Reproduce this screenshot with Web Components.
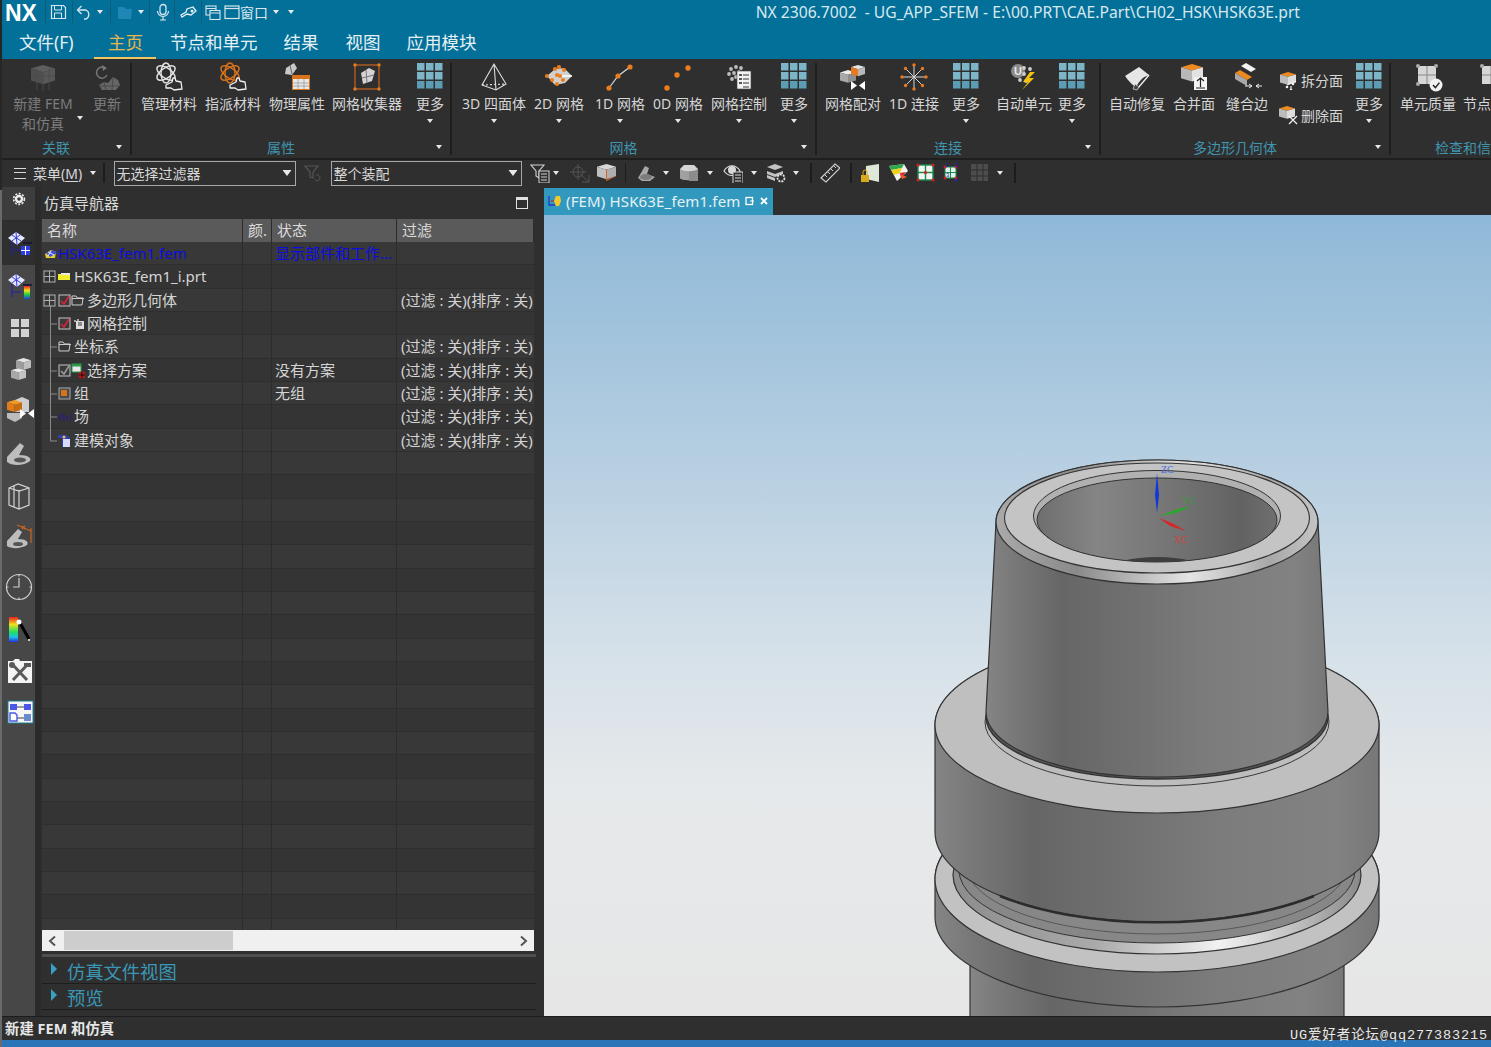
<!DOCTYPE html>
<html lang="zh">
<head>
<meta charset="utf-8">
<title>NX 2306</title>
<style>
    html, body { margin: 0; height: 100%; overflow: hidden; }
    body {
        background: linear-gradient(#262626 0, #262626 190px, #6a6a6a 190px);
        color: #dcdcdc;
        font-family: "Noto Sans", "Noto Sans CJK SC", sans-serif;
    }
</style>
</head>
<body>
<nx-app>
    <nx-titlebar></nx-titlebar>
    <nx-menubar></nx-menubar>
    <nx-ribbon>
        <nx-group w="130" pad="3" title="关联" disabled>
            <nx-rbtn w="76" icon="newfem" menu="side" grey>新建 FEM<br>和仿真</nx-rbtn>
            <nx-rbtn w="40" icon="update" grey>更新</nx-rbtn>
        </nx-group>
        <nx-group w="320" pad="8" title="属性">
            <nx-rbtn w="58" icon="matman">管理材料</nx-rbtn>
            <nx-rbtn w="58" icon="matset">指派材料</nx-rbtn>
            <nx-rbtn w="58" icon="phys">物理属性</nx-rbtn>
            <nx-rbtn w="70" icon="collector">网格收集器</nx-rbtn>
            <nx-rbtn w="34" ml="5" icon="more" menu="down">更多</nx-rbtn>
        </nx-group>
        <nx-group w="365" pad="9" title="网格">
            <nx-rbtn w="66" icon="tetra" menu="down">3D 四面体</nx-rbtn>
            <nx-rbtn w="52" icon="mesh2d" menu="down">2D 网格</nx-rbtn>
            <nx-rbtn w="58" icon="mesh1d" menu="down">1D 网格</nx-rbtn>
            <nx-rbtn w="46" icon="mesh0d" menu="down">0D 网格</nx-rbtn>
            <nx-rbtn w="64" icon="meshctl" menu="down">网格控制</nx-rbtn>
            <nx-rbtn w="34" icon="more" menu="down">更多</nx-rbtn>
        </nx-group>
        <nx-group w="284" pad="7" title="连接">
            <nx-rbtn w="58" icon="pair">网格配对</nx-rbtn>
            <nx-rbtn w="52" icon="star">1D 连接</nx-rbtn>
            <nx-rbtn w="40" icon="more" menu="down">更多</nx-rbtn>
            <nx-rbtn w="58" ml="3" icon="auto">自动单元</nx-rbtn>
            <nx-rbtn w="26" icon="more" menu="down">更多</nx-rbtn>
        </nx-group>
        <nx-group w="290" pad="7" title="多边形几何体">
            <nx-rbtn w="58" icon="repair">自动修复</nx-rbtn>
            <nx-rbtn w="44" icon="merge">合并面</nx-rbtn>
            <nx-rbtn w="50" icon="stitch">缝合边</nx-rbtn>
            <nx-stack w="67"></nx-stack>
            <nx-rbtn w="36" icon="more" menu="down">更多</nx-rbtn>
        </nx-group>
        <nx-group w="100" pad="8" title="检查和信" last>
            <nx-rbtn w="58" icon="quality">单元质量</nx-rbtn>
            <nx-rbtn w="28" icon="nodeq">节点</nx-rbtn>
        </nx-group>
    </nx-ribbon>
    <nx-toolbar></nx-toolbar>
    <nx-main>
        <nx-rail></nx-rail>
        <nx-navigator>
            <nx-row kind="fem" state="显示部件和工作..." blue>HSK63E_fem1.fem</nx-row>
            <nx-row kind="prt">HSK63E_fem1_i.prt</nx-row>
            <nx-row kind="poly" filter>多边形几何体</nx-row>
            <nx-row kind="ctrl">网格控制</nx-row>
            <nx-row kind="csys" filter>坐标系</nx-row>
            <nx-row kind="sel" state="没有方案" filter>选择方案</nx-row>
            <nx-row kind="grp" state="无组" filter>组</nx-row>
            <nx-row kind="fld" filter>场</nx-row>
            <nx-row kind="obj" filter>建模对象</nx-row>
        </nx-navigator>
        <nx-viewport></nx-viewport>
    </nx-main>
    <nx-statusbar></nx-statusbar>
</nx-app>

<script>
// cube in three flat faces, used by a lot of the icons
function cube(x, y, s, top, left, right) {
    const h = s * 0.5;
    return `<path d="M${x} ${y + h * .6} L${x + s} ${y} L${x + 2 * s} ${y + h * .6} L${x + s} ${y + h * 1.2}Z" fill="${top}"/>
        <path d="M${x} ${y + h * .6} L${x + s} ${y + h * 1.2} V${y + h * 1.2 + s} L${x} ${y + h * .6 + s}Z" fill="${left}"/>
        <path d="M${x + 2 * s} ${y + h * .6} L${x + s} ${y + h * 1.2} V${y + h * 1.2 + s} L${x + 2 * s} ${y + h * .6 + s}Z" fill="${right}"/>`;
}

function atom(color) {
    return `<g fill="none" stroke="${color}" stroke-width="1.4">
        <ellipse cx="12" cy="11" rx="10.5" ry="5" transform="rotate(35 12 11)"/>
        <ellipse cx="12" cy="11" rx="10.5" ry="5" transform="rotate(-35 12 11)"/>
        <ellipse cx="12" cy="11" rx="5" ry="10"/></g>
        <path d="M12 23 l6 -3 1 -4 2 0 1 3 5 1 1 7 -8 1 -3 -2 -5 0z" fill="#2f2f2f" stroke="#f0f0f0" stroke-width="1.3" stroke-linejoin="round"/>`;
}

function nodes(points, r, color) {
    return points.map(p => `<circle cx="${p[0]}" cy="${p[1]}" r="${r}" fill="${color}"/>`).join('');
}

function butterfly(x, y) {
    return `<path d="M${x} ${y} l6 4.5 -6 4.5z M${x + 14} ${y} l-6 4.5 6 4.5z" fill="#fff"/>`;
}

function star() {
    let rays = '', ends = [];
    for (let i = 0; i < 8; i++) {
        const a = i * Math.PI / 4 + Math.PI / 2;
        const x = 15 + 12 * Math.cos(a), y = 15 + 12 * Math.sin(a);
        rays += `<path d="M15 15 L${x} ${y}" stroke="#d8d8d8" stroke-width="1"/>`;
        ends.push([x, y]);
    }
    return rays + nodes(ends, 1.7, '#e87a1d');
}

// navigator tab: mesh diamond, tree line and a small square
function navBase() {
    return `<path d="M4 10 L12 4 L21 10 L13 17z" fill="#e4e9ff"/><path d="M8 7 L17 13 M12 4 L13 17 M16 7 L8 13" stroke="#3838d8"/>
        <path d="M8 14 V27 M8 22 H17 M19 15 H28" fill="none" stroke="#2020b0"/><path d="M19 15 H28" stroke="#111" stroke-width="1.2"/>`;
}

const ICONS = {
    more: `<g fill="#7db5c8"><rect x="2" y="1" width="7.5" height="7.5"/><rect x="11" y="1" width="7.5" height="7.5"/><rect x="20" y="1" width="7.5" height="7.5"/>
        <rect x="2" y="10" width="7.5" height="7.5"/><rect x="11" y="10" width="7.5" height="7.5"/><rect x="20" y="10" width="7.5" height="7.5"/></g>
        <g fill="#5c9cb4"><rect x="2" y="19" width="7.5" height="7.5"/><rect x="11" y="19" width="7.5" height="7.5"/><rect x="20" y="19" width="7.5" height="7.5"/></g>`,
    newfem: `<g opacity=".75">${cube(3, 3, 12, '#6e6e6e', '#5a5a5a', '#666')}</g>
        <path d="M3 14h24M9 6v22M15 10v19M21 6v22" stroke="#4c4c4c" stroke-width=".8"/>`,
    update: `<path d="M13 6 A5.5 5.5 0 1 0 15 13" fill="none" stroke="#777" stroke-width="1.5"/><path d="M10 3 L15 6 L11 9z" fill="#777"/>
        <path d="M7 23 L12 20 L16 21 L21 15 L26 18 L28 23 L24 28 H10z" fill="#666"/><path d="M12 20 L14 28 M21 15 L20 28 M8 24 H27" stroke="#444" stroke-width=".8"/>`,
    matman: atom('#e4e4e4'),
    matset: atom('#d8731c'),
    phys: `<path d="M4 6 L12 1 L15 6 L10 13 L3 12z" fill="#c8c8c8"/><path d="M8 3 L10 12" stroke="#666"/>
        <rect x="10.5" y="13.5" width="17" height="14" fill="#e8e8e8" stroke="#d8731c"/><rect x="10.5" y="13.5" width="17" height="3.5" fill="#d8731c"/>
        <path d="M16 17v10M22 17v10M11 21h16M11 24h16" stroke="#999" stroke-width=".8"/>`,
    collector: `<rect x="3" y="3" width="24" height="24" fill="none" stroke="#c8641e" stroke-width="1.2"/>${nodes([[3, 3], [27, 3], [3, 27], [27, 27]], 1.7, '#e87a1d')}
        <path d="M9 11 L17 6 L23 9 L20 19 L11 22z" fill="#d4d4d4"/><path d="M14 8 L15 21 M10 16 L22 13" stroke="#777"/>`,
    tetra: `<g fill="none" stroke="#dcdcdc" stroke-width="1.1"><path d="M15 2 L3 23 L17 28 L27 22Z M15 2 L17 28"/><path d="M3 23 L27 22" stroke-dasharray="2 2"/></g>`,
    mesh2d: `<path d="M3 14 L11 7 L20 6 L28 14 L21 21 L11 23z" fill="#d0d0d0"/>
        ${nodes([[3, 14], [11, 7], [15, 5], [20, 8], [13, 13], [16, 14], [8, 18], [13, 22], [19, 18]], 2.1, '#ea7d1e')}<path d="M18 14h10" stroke="#fff" stroke-width="1.5"/>`,
    mesh1d: `<path d="M4 26 L13 14 L25 5" fill="none" stroke="#d8d8d8" stroke-width="1.2"/>${nodes([[4, 26], [13, 14], [25, 5]], 2.6, '#ea7d1e')}`,
    mesh0d: nodes([[4, 26], [14, 13], [25, 6]], 2.7, '#ea7d1e'),
    meshctl: `${nodes([[7, 7], [12, 5], [17, 6], [5, 12], [10, 11], [15, 10], [8, 17], [12, 15]], 1.9, '#bdbdbd')}
        <rect x="13" y="9" width="14" height="18" fill="#f2f2f2" stroke="#444" stroke-width=".6"/>
        <path d="M19 13h6M19 17h6M19 21h6M19 25h6" stroke="#333"/><path d="M15 12h3v2h-3zM15 16h3v2h-3zM15 20h3v2h-3z" fill="#555"/>`,
    pair: `${cube(2, 8, 8, '#ececec', '#a8a8a8', '#8e8e8e')}${cube(13, 3, 7, '#e4e4e4', '#e87a1d', '#b8b8b8')}${butterfly(13, 19)}`,
    star: star(),
    auto: `<circle cx="9" cy="9" r="7" fill="#8a8a8a"/><text x="9" y="13" font-size="11" font-weight="700" text-anchor="middle" fill="#e8e8e8" font-family="Liberation Sans">U</text>
        ${nodes([[15, 6], [21, 7], [15, 12], [11, 18], [17, 19]], 1.9, '#cfcfcf')}<path d="M21 10 L14 20 L19 20 L13 28 L25 16 L20 16 L26 10z" fill="#f4c20d"/>`,
    repair: `<path d="M3 14 L17 5 L27 13 C20 15 17 20 14 25 C10 23 6 18 3 14z" fill="#e6e6e6"/><path d="M27 13 L16 26" stroke="#eee" stroke-width="1.4"/>
        <path d="M13 22 l4 3 -2 3 -4 -1z" fill="#444" stroke="#ddd" stroke-width=".7"/>`,
    merge: `${cube(2, 2, 11, '#ee8a1f', '#b8b8b8', '#e2e2e2')}<rect x="15" y="15" width="13" height="13" fill="#f4f4f4"/>
        <path d="M21.5 16v9M18 19l3.5-3 3.5 3M17 26h9" stroke="#222" fill="none" stroke-width="1.2"/>`,
    stitch: `<path d="M9 4 L14 1 L24 7 L19 10z" fill="#f2f2f2"/><path d="M3 11 L8 8 L20 15 L15 18z" fill="#ee8a1f"/><path d="M3 11 V17 L15 24 V18z" fill="#a8a8a8"/>
        <path d="M13 24h7M17 22l3 2-3 2M30 24h-6M27 22l-3 2 3 2" stroke="#eee" fill="none"/>`,
    split: `${cube(2, 2, 8, '#ee8a1f', '#bbb', '#ddd')}<path d="M9 15 L18 11 M13 16 L13 20" stroke="#eee" stroke-width="1.2"/>${nodes([[9, 17], [15, 14], [13, 20]], 1.3, '#f0f0f0')}`,
    del: `${cube(1, 1, 8, '#ee8a1f', '#bbb', '#ddd')}<path d="M11 11l8 8M19 11l-8 8" stroke="#eee" stroke-width="1.3"/>`,
    quality: `<rect x="5" y="4" width="18" height="18" fill="#d6d6d6"/><path d="M14 4v18M5 13h18" stroke="#888"/>${nodes([[5, 4], [23, 4], [5, 22], [23, 22]], 2, '#aaa')}
        <circle cx="23" cy="23" r="6.5" fill="#f2f2f2"/><path d="M20 23l2.4 2.6 4-5" stroke="#222" fill="none" stroke-width="1.5"/>`,
    nodeq: `<rect x="20" y="4" width="18" height="18" fill="#d6d6d6"/><path d="M29 4v18M20 13h18" stroke="#888"/><circle cx="20" cy="4" r="2" fill="#aaa"/>`,

    save: `<path d="M2.5 2.5h12l2 2v11h-14z" fill="none" stroke="#d8e6ec" stroke-width="1.2"/><path d="M5.5 3v4h7V3M5.5 15v-5h7v5" fill="none" stroke="#d8e6ec"/>`,
    undo: `<path d="M3 7 H11 A5 5 0 0 1 11 16 H9" fill="none" stroke="#d8e6ec" stroke-width="1.3"/><path d="M6.5 3 L2.5 7 L6.5 11" fill="none" stroke="#d8e6ec" stroke-width="1.3"/>`,
    openf: `<path d="M2 4h6l2 2h6l-1 10H2z" fill="#1f86b5"/>`,
    mic: `<rect x="6" y="1.5" width="6" height="10" rx="3" fill="none" stroke="#d8e6ec" stroke-width="1.3"/><path d="M3.5 8a5.5 5.5 0 0 0 11 0M9 14v3M6 17h6" fill="none" stroke="#d8e6ec" stroke-width="1.2"/>`,
    pin: `<path d="M2 12 L7 9 L8 6 L14 4 L17 8 L12 12 L8 11 L3 14z" fill="none" stroke="#e6eff3" stroke-width="1.3"/><circle cx="13" cy="8" r="1.5" fill="#e6eff3"/>`,
    wins: `<rect x="2" y="3" width="10" height="9" fill="none" stroke="#d8e6ec" stroke-width="1.1"/><rect x="6" y="7.5" width="10" height="9" fill="#03709a" stroke="#d8e6ec" stroke-width="1.1"/><path d="M6 10h10M2 5.5h10" stroke="#d8e6ec"/>`,
    win: `<rect x="2" y="3" width="14" height="12.5" fill="none" stroke="#d8e6ec" stroke-width="1.2"/><path d="M2 5.5h14" stroke="#d8e6ec" stroke-width="1.2"/>`,

    filterg: `<path d="M2 3h13l-5 6v6l-3-1V9z" fill="none" stroke="#555" stroke-width="1.2"/><path d="M12 17a3 3 0 1 0 1-5" fill="none" stroke="#555"/>`,
    filter: `<path d="M1 2h13l-5 6v7l-3-2V8z" fill="none" stroke="#d4d4d4" stroke-width="1.1"/><rect x="9" y="8" width="10" height="12" fill="#2f2f2f" stroke="#d4d4d4"/><path d="M11 11h6M11 14h6M11 17h6" stroke="#d4d4d4"/>`,
    cross: `<g stroke="#555" fill="none"><circle cx="8" cy="9" r="5"/><path d="M8 1v16M0 9h16M10 11l9 8M19 12v7h-7"/></g>`,
    snap: `${cube(1, 1, 9.5, '#d8d8d8', '#c0c0c0', '#aeaeae')}<path d="M10.5 6.5v11l8-4" fill="none" stroke="#d0682a"/>`,
    shade: `<path d="M2 15 L9 3 L13 5 L11 11 L19 14 L14 18 H6z" fill="#a8a8a8"/><ellipse cx="10" cy="14" rx="6" ry="3" fill="#7c7c7c"/>`,
    cyl: `<path d="M1 6v9c0 3 18 3 18 0V6z" fill="#a0a0a0"/><path d="M10 4v14h9V6z" fill="#8c8c8c"/><path d="M1 6 L5 2 H15 L19 6 C15 9 5 9 1 6z" fill="#d4d4d4"/>`,
    eye: `<path d="M1 8c4-7 12-7 16 0-4 6-12 6-16 0z" fill="none" stroke="#d8d8d8" stroke-width="1.2"/><circle cx="9" cy="7" r="4" fill="#d8d8d8"/><rect x="10" y="9" width="10" height="12" fill="#2f2f2f" stroke="#d8d8d8"/><path d="M12 12h6M12 15h6M12 18h6" stroke="#d8d8d8"/>`,
    layers: `<path d="M1 4l8-3 8 3-8 3zM1 8l8 3 8-3v3l-8 3-8-3zM1 12l8 3v3l-8-3z" fill="#c4c4c4"/><circle cx="15" cy="15" r="3.5" fill="#2f2f2f" stroke="#ddd" stroke-width="1.8" stroke-dasharray="2 1"/>`,
    ruler: `<path d="M1 15 L15 1 L20 5 L6 19z" fill="none" stroke="#cfcfcf" stroke-width="1.2"/><path d="M5 12l2 2M8 9l2 2M11 6l2 2M14 3l2 2" stroke="#cfcfcf"/>`,
    lock: `<path d="M6 3 L19 1 V19 L6 16z" fill="#dfe7d8"/><rect x="1" y="12" width="8" height="7" fill="#d9a920"/><path d="M3 12V9a2 2 0 0 1 4 0v3" fill="none" stroke="#d9a920"/>`,
    cone: `<path d="M1 3 L16 1 L20 8 L9 18z" fill="#f4f4f4"/><path d="M1 3 L16 1 L14 5 L3 7z" fill="#2aa84a"/><path d="M3 7 L14 5 L12 10 L6 12z" fill="#ecd21c"/><path d="M12 10 L18 9 L13 15z" fill="#e02424"/><path d="M12 11l7 3-5 2z" fill="#ea5a2a"/>`,
    grid4: `<rect x="2" y="2" width="15" height="15" fill="#f4f4f4" stroke="#1b8a4a" stroke-width="1.4"/><path d="M9.5 2v15M2 9.5h15" stroke="#1b8a4a" stroke-width="1.4"/>${nodes([[2, 2], [17, 2], [9.5, 9.5], [2, 17], [17, 17]], 1.6, '#d02020')}`,
    grid4n: `<rect x="3" y="4" width="11" height="11" fill="#dff2f0" stroke="#1b8a4a"/><path d="M8.5 4v11M3 9.5h11" stroke="#1b8a4a"/>${nodes([[3, 4], [14, 4], [3, 15], [14, 15]], 1.5, '#c02020')}
        <g font-size="6" fill="#2020d0" font-family="Liberation Sans"><text x="3" y="3.5">1</text><text x="13" y="3.5">2</text><text x="4" y="14">3</text><text x="13" y="19">4</text></g>`,
    gridg: `<rect x="1" y="1" width="17" height="17" fill="#4d4d4d"/><path d="M7 1v17M13 1v17M1 7h17M1 13h17" stroke="#2f2f2f"/>`,

    gear: `<circle cx="9" cy="9" r="3" fill="none" stroke="#eee" stroke-width="2.4"/><circle cx="9" cy="9" r="5.4" fill="none" stroke="#eee" stroke-width="1.6" stroke-dasharray="2 1.5"/>`,
    navfem: `${navBase()}<rect x="17" y="18" width="9" height="9" fill="#2c3ce0"/><path d="M21.5 18v9M17 22.5h9" stroke="#fff"/>`,
    navres: `${navBase()}<defs><linearGradient id="rb" x1="0" y1="0" x2="0" y2="1"><stop offset="0" stop-color="#ee2020"/><stop offset=".35" stop-color="#eee020"/><stop offset=".65" stop-color="#20d040"/><stop offset="1" stop-color="#2040e0"/></linearGradient></defs><rect x="20" y="16" width="6" height="13" fill="url(#rb)"/>`,
    tiles: `<g fill="#d2d2d2"><rect x="7" y="7" width="8" height="8"/><rect x="17" y="7" width="8" height="8"/><rect x="7" y="17" width="8" height="8"/><rect x="17" y="17" width="8" height="8"/></g>`,
    blocks: `${cube(7, 14, 7.5, '#e8e8e8', '#a8a8a8', '#c4c4c4')}${cube(12, 4, 7.5, '#e4e4e4', '#9c9c9c', '#bebebe')}`,
    orange: `<path d="M11 4 L18 1 L25 4 V16 H11z" fill="#cfcfcf"/><path d="M3 17 V22 L11 26 L18 22 V17z" fill="#bcbcbc"/>${cube(3, 4, 7.5, '#f19a2a', '#e07d18', '#c86c10')}${butterfly(16, 13)}`,
    bracket: `<path d="M3 19 L16 5 L20 8 L15 17 C24 17 28 20 26 23 C20 28 8 28 3 24z" fill="#bdbdbd"/><ellipse cx="16" cy="22" rx="6" ry="2.5" fill="#555"/>`,
    books: `<path d="M5 8 L14 4 L25 8 V25 L15 29 L5 25z M15 10 V29 M5 8 L15 11 L25 8 M10 6 V27" fill="none" stroke="#d4d4d4" stroke-width="1.2"/>`,
    dim: `<path d="M3 19 L14 7 L18 10 L14 17 C22 17 25 20 23 23 C17 27 7 27 3 24z" fill="#bdbdbd"/><ellipse cx="14" cy="22" rx="5" ry="2" fill="#555"/>
        <path d="M13 3 L27 9 M27 6 V21 M18 4 l3 3 M21 4 l-3 3" stroke="#c8641e" fill="none" stroke-width="1.2"/>`,
    clock: `<circle cx="15" cy="15" r="12.5" fill="none" stroke="#cfcfcf" stroke-width="1.2"/><path d="M15 6v9H9M15 2.5v2M15 25.5v2M2.5 15h2M25.5 15h2" stroke="#cfcfcf" stroke-width="1.2" fill="none"/>`,
    spectrum: `<defs><linearGradient id="sp" x1="0" y1="0" x2="0" y2="1"><stop offset="0" stop-color="#ee2020"/><stop offset=".3" stop-color="#eee020"/><stop offset=".6" stop-color="#20e060"/><stop offset=".8" stop-color="#20c0e0"/><stop offset="1" stop-color="#2030e0"/></linearGradient></defs>
        <rect x="5" y="3" width="9" height="25" fill="url(#sp)"/><path d="M16 9 L25 25" stroke="#000" stroke-width="3"/><circle cx="15" cy="8" r="2.5" fill="#fff"/><circle cx="25" cy="26" r="1" fill="#fff"/>`,
    tools: `<path d="M4 6h5l2-2h4l1 2h12v22H4z" fill="#f4f4f4"/><path d="M9 10 L23 25 M23 10 L9 25" stroke="#5a5a5a" stroke-width="3"/><circle cx="8" cy="10" r="3" fill="#5a5a5a"/><path d="M20 8h7v4h-7z" fill="#5a5a5a"/>`,
    layout: `<rect x="4" y="4" width="25" height="22" fill="#f6f6f6" stroke="#1f7f8f"/><rect x="6" y="7" width="7" height="6" fill="#4a58e8"/><rect x="20" y="7" width="7" height="6" fill="#4a58e8"/><path d="M13 10h7M13 21h7" stroke="#444"/>
        <path d="M6 16h5l2 2v6H6z" fill="#fff" stroke="#4a58e8" stroke-width="1.4"/><rect x="20" y="17" width="7" height="7" fill="#6a8ad0"/>`,
};

class NxIcon extends HTMLElement {
    connectedCallback() {
        const w = this.getAttribute('w') || 30;
        const h = this.getAttribute('h') || w;
        const vb = this.getAttribute('vb') || `0 0 ${w} ${h}`;
        this.attachShadow({ mode: 'open' }).innerHTML = `
            <style>:host { display: block; flex: none; width: ${w}px; height: ${h}px; } svg { display: block; }</style>
            <svg width="${w}" height="${h}" viewBox="${vb}">${ICONS[this.getAttribute('name')] || ''}</svg>`;
    }
}

class NxCaret extends HTMLElement {
    connectedCallback() {
        const color = this.getAttribute('color') || '#e8e8e8';
        this.attachShadow({ mode: 'open' }).innerHTML = `
            <style>
                :host { display: block; flex: none; width: 0; height: 0;
                    border-left: 3.5px solid transparent; border-right: 3.5px solid transparent; border-top: 4px solid ${color}; }
            </style>`;
    }
}

class NxApp extends HTMLElement {
    connectedCallback() {
        this.attachShadow({ mode: 'open' }).innerHTML = `
            <style>:host { display: flex; flex-direction: column; height: 100vh; padding-left: 2px; box-sizing: border-box; overflow: hidden; }</style>
            <slot></slot>`;
    }
}

class NxTitlebar extends HTMLElement {
    connectedCallback() {
        this.attachShadow({ mode: 'open' }).innerHTML = `
            <style>
                :host { display: flex; align-items: center; height: 27px; background: #03709a; color: #dbe9ef; flex: none; padding: 0 191px 3px 0; box-sizing: border-box; }
                .nx { font: 700 23px/27px "Liberation Sans", sans-serif; color: #fff; margin-left: 3px; width: 35px; align-self: flex-start; height: 27px; }
                .sep { width: 1px; height: 22px; background: #0c5b78; }
                .txt { font-size: 14px; }
                .title { margin-left: auto; font-size: 15.65px; white-space: pre; color: #d8e8ef; }
            </style>
            <div class="nx">NX</div>
            <div class="sep" style="margin-left:5px"></div>
            <nx-icon name="save" w="18" h="18" style="margin-left:3px"></nx-icon>
            <div class="sep" style="margin-left:5px"></div>
            <nx-icon name="undo" w="18" h="18" style="margin-left:2px"></nx-icon>
            <nx-caret style="margin-left:4px"></nx-caret>
            <div class="sep" style="margin-left:7px"></div>
            <nx-icon name="openf" w="18" h="18" style="margin-left:5px"></nx-icon>
            <nx-caret style="margin-left:4px"></nx-caret>
            <div class="sep" style="margin-left:5px"></div>
            <nx-icon name="mic" w="18" h="18" style="margin-left:4px"></nx-icon>
            <div class="sep" style="margin-left:2px"></div>
            <nx-icon name="pin" w="18" h="18" style="margin-left:4px"></nx-icon>
            <div class="sep" style="margin-left:4px"></div>
            <nx-icon name="wins" w="18" h="18" style="margin-left:2px"></nx-icon>
            <nx-icon name="win" w="18" h="18" style="margin-left:1px"></nx-icon>
            <span class="txt" style="margin-left:-1px">窗口</span>
            <nx-caret style="margin-left:5px"></nx-caret>
            <nx-caret style="margin-left:9px"></nx-caret>
            <div class="title">NX 2306.7002  - UG_APP_SFEM - E:\\00.PRT\\CAE.Part\\CH02_HSK\\HSK63E.prt</div>`;
    }
}

class NxMenubar extends HTMLElement {
    connectedCallback() {
        this.attachShadow({ mode: 'open' }).innerHTML = `
            <style>
                :host { display: flex; height: 32px; background: #03709a; flex: none; font-size: 17.5px; color: #e6f0f4; }
                div { line-height: 30px; height: 32px; box-sizing: border-box; white-space: nowrap; }
                .on { color: #e9b64e; border-bottom: 2px solid #f2c564; padding: 0 13px 0 14px; margin-left: 20px; }
            </style>
            <div style="margin-left:17px;width:55px">文件(F)</div>
            <div class="on">主页</div>
            <div style="margin-left:14px">节点和单元</div>
            <div style="margin-left:26px">结果</div>
            <div style="margin-left:27px">视图</div>
            <div style="margin-left:26px">应用模块</div>`;
    }
}

class NxRibbon extends HTMLElement {
    connectedCallback() {
        this.attachShadow({ mode: 'open' }).innerHTML = `
            <style>:host { display: flex; height: 99px; background: #2f2f2f; flex: none; overflow: hidden; }</style>
            <slot></slot>`;
    }
}

class NxGroup extends HTMLElement {
    connectedCallback() {
        const last = this.hasAttribute('last');
        this.attachShadow({ mode: 'open' }).innerHTML = `
            <style>
                :host { display: flex; flex-direction: column; flex: none; box-sizing: border-box; position: relative;
                    width: ${this.getAttribute('w')}px; }
                :host::after { content: ""; position: absolute; right: 0; top: 4px; bottom: 3px; width: 2px; background: #1e1e1e; display: ${last ? 'none' : 'block'}; }
                .body { flex: 1; display: flex; gap: 6px; padding-left: ${this.getAttribute('pad')}px; min-height: 0; }
                .foot { height: 21px; line-height: 21px; text-align: ${last ? 'left' : 'center'}; font-size: 14px; color: #3f94ae; position: relative;
                    padding: 0 ${last ? 0 : 22}px 0 ${last ? 44 : 0}px; white-space: nowrap; }
                nx-caret { position: absolute; right: 10px; top: 8px; }
            </style>
            <div class="body"><slot></slot></div>
            <div class="foot">${this.getAttribute('title')}${last ? '' : '<nx-caret></nx-caret>'}</div>`;
    }
}

class NxRbtn extends HTMLElement {
    connectedCallback() {
        const menu = this.getAttribute('menu');
        const grey = this.hasAttribute('grey');
        const ml = this.getAttribute('ml') || 0;
        this.attachShadow({ mode: 'open' }).innerHTML = `
            <style>
                :host { display: flex; flex-direction: column; align-items: center; flex: none; position: relative; box-sizing: border-box;
                    width: ${this.getAttribute('w')}px; margin-left: ${ml}px; padding-top: 3px; }
                .label { font-size: 14px; line-height: 20px; text-align: center; white-space: nowrap; margin-top: 2px; color: ${grey ? '#7d7d7d' : '#d6d6d6'}; }
                .down { margin-top: 5px; }
                .side { position: absolute; right: -2px; top: 57px; }
            </style>
            <nx-icon name="${this.getAttribute('icon')}" w="30"></nx-icon>
            <div class="label"><slot></slot></div>
            ${menu === 'down' ? '<nx-caret class="down"></nx-caret>' : ''}
            ${menu === 'side' ? '<nx-caret class="side"></nx-caret>' : ''}`;
    }
}

// the two small buttons on top of each other in the polygon group
class NxStack extends HTMLElement {
    connectedCallback() {
        this.attachShadow({ mode: 'open' }).innerHTML = `
            <style>
                :host { display: flex; flex-direction: column; gap: 15px; flex: none; width: ${this.getAttribute('w')}px; padding-top: 11px; box-sizing: border-box; font-size: 14px; color: #d6d6d6; }
                div { display: flex; align-items: center; gap: 3px; height: 20px; white-space: nowrap; }
            </style>
            <div><nx-icon name="split" w="20" vb="0 0 20 20"></nx-icon>拆分面</div>
            <div><nx-icon name="del" w="20" vb="0 0 20 20"></nx-icon>删除面</div>`;
    }
}

class NxSelect extends HTMLElement {
    connectedCallback() {
        this.attachShadow({ mode: 'open' }).innerHTML = `
            <style>
                :host { display: flex; align-items: center; justify-content: space-between; box-sizing: border-box; flex: none; height: 25px;
                    width: ${this.getAttribute('w')}px; margin-left: ${this.getAttribute('ml')}px; border: 1.5px solid #a8a8a8; padding: 0 5px 0 2px;
                    font-size: 14px; color: #d8d8d8; white-space: nowrap; }
                nx-caret { transform: scale(1.5); }
            </style>
            <slot></slot><nx-caret></nx-caret>`;
    }
}

class NxToolbar extends HTMLElement {
    connectedCallback() {
        const tool = (name, ml, w = 20) => `<nx-icon name="${name}" w="${w}" h="20" vb="0 0 ${w} 20" style="margin-left:${ml}px"></nx-icon>`;
        const caret = ml => `<nx-caret style="margin-left:${ml}px"></nx-caret>`;
        const sep = ml => `<div class="sep" style="margin-left:${ml}px"></div>`;
        this.attachShadow({ mode: 'open' }).innerHTML = `
            <style>
                :host { display: flex; align-items: center; height: 29px; box-sizing: border-box; background: #2f2f2f;
                    border-top: 2px solid #1f1f1f; padding-bottom: 1px; flex: none; font-size: 14px; color: #d8d8d8; white-space: nowrap; }
                .sep { flex: none; width: 1.5px; height: 20px; background: #1c1c1c; }
                .burger { margin-left: 12px; width: 12px; height: 9px; border-top: 1.2px solid #d8d8d8; border-bottom: 1.2px solid #d8d8d8; position: relative; }
                .burger::after { content: ""; position: absolute; left: 0; right: 0; top: 3.5px; height: 1.2px; background: #d8d8d8; }
                .menu { margin-left: 7px; width: 54px; }
                u { text-decoration: underline; text-underline-offset: 2px; }
            </style>
            <div class="burger"></div>
            <div class="menu">菜单(<u>M</u>)</div>
            ${caret(3)}${sep(7)}
            <nx-select w="182" ml="9">无选择过滤器</nx-select>
            ${tool('filterg', 7)}
            <nx-select w="191" ml="8">整个装配</nx-select>
            ${tool('filter', 8)}${caret(3)}
            ${tool('cross', 11)}${tool('snap', 6)}${sep(9)}
            ${tool('shade', 10)}${caret(7)}
            ${tool('cyl', 10)}${caret(7.5)}
            ${tool('eye', 10.5)}${caret(7.5)}
            ${tool('layers', 9.5)}${caret(6.5)}
            ${sep(11.5)}${tool('ruler', 8.5)}${sep(10)}
            ${tool('lock', 8.5)}${tool('cone', 8)}${tool('grid4', 8)}${tool('grid4n', 6)}${tool('gridg', 8)}${caret(6.5)}
            ${sep(11.5)}`;
    }
}

class NxMain extends HTMLElement {
    connectedCallback() {
        this.attachShadow({ mode: 'open' }).innerHTML = `
            <style>:host { display: flex; flex: 1; min-height: 0; background: #2f2f2f; }</style>
            <slot></slot>`;
    }
}

class NxRail extends HTMLElement {
    connectedCallback() {
        const names = ['navres', 'tiles', 'blocks', 'orange', 'bracket', 'books', 'dim'];
        const lower = ['clock', 'spectrum', 'tools', 'layout'];
        const item = n => `<div class="item"><nx-icon name="${n}" w="30"></nx-icon></div>`;
        this.attachShadow({ mode: 'open' }).innerHTML = `
            <style>
                :host { display: flex; flex-direction: column; flex: none; width: 33px; background: #474747; border-right: 6px solid #2b2b2b; box-sizing: content-box; }
                .gear { height: 34px; background: #3d3d3d; display: flex; justify-content: center; padding-top: 3px; box-sizing: border-box; border-bottom: 1px solid #2b2b2b; }
                .item { height: 42px; display: flex; align-items: center; justify-content: center; flex: none; }
                .item.on { background: #2f2f2f; height: 44px; margin-bottom: -1px; }
                .low { margin-top: 8px; display: flex; flex-direction: column; }
                .low .item { height: 41.7px; }
            </style>
            <div class="gear"><nx-icon name="gear" w="18"></nx-icon></div>
            <div class="item on"><nx-icon name="navfem" w="30"></nx-icon></div>
            ${names.map(item).join('')}
            <div class="low">${lower.map(item).join('')}</div>`;
    }
}

class NxNavigator extends HTMLElement {
    connectedCallback() {
        let blanks = '';
        for (let i = 0; i < 21; i++) blanks += '<nx-row></nx-row>';
        this.attachShadow({ mode: 'open' }).innerHTML = `
            <style>
                :host { display: flex; flex-direction: column; flex: none; width: 499px; background: #2f2f2f; padding-left: 1px; box-sizing: border-box; }
                .head { height: 32px; display: flex; align-items: center; justify-content: space-between; padding: 0 12px 1px 2px; box-sizing: border-box; font-size: 15px; color: #d8d8d8; flex: none; }
                .max { width: 10px; height: 8px; border: 1.3px solid #e0e0e0; border-top-width: 3px; }
                .table { width: 492px; flex: 1; min-height: 0; display: flex; flex-direction: column; overflow: hidden; background: #363636; }
                .th { display: grid; grid-template-columns: 201px 29px 125px 1fr; flex: none; height: 23px; font-size: 15px; color: #dadada; }
                .th div { background: #5a5a5a; border-right: 1px solid #2c2c2c; line-height: 22px; padding-left: 5px; overflow: hidden; white-space: nowrap; }
                .bar { width: 492px; height: 21px; flex: none; background: #f0f0f0; display: flex; align-items: center; justify-content: space-between; position: relative; padding: 0 6px; box-sizing: border-box; }
                .thumb { position: absolute; left: 22px; width: 169px; top: 1px; bottom: 1px; background: #cdcdcd; }
                .rule { height: 3px; background: #4f4f4f; margin-top: 3px; width: 494px; flex: none; }
                .sec { height: 25px; padding-top: 1px; width: 494px; flex: none; display: flex; align-items: center; font-size: 18.3px; color: #3a97b5; border-bottom: 1.5px solid #1d1d1d; box-sizing: content-box; }
                .sec + .sec { height: 24px; }
                .tri { width: 0; height: 0; border-left: 6px solid #3aa0c2; border-top: 6px solid transparent; border-bottom: 6px solid transparent; margin: 0 10px 4px 9px; }
            </style>
            <div class="head">仿真导航器<div class="max"></div></div>
            <div class="table">
                <div class="th"><div>名称</div><div>颜.</div><div>状态</div><div>过滤</div></div>
                <slot></slot>
                ${blanks}
            </div>
            <div class="bar">
                <div class="thumb"></div>
                <svg width="9" height="12" viewBox="0 0 9 12"><path d="M7 1.5 L2 6 L7 10.5" fill="none" stroke="#555" stroke-width="2"/></svg>
                <svg width="9" height="12" viewBox="0 0 9 12"><path d="M2 1.5 L7 6 L2 10.5" fill="none" stroke="#555" stroke-width="2"/></svg>
            </div>
            <div class="rule"></div>
            <div class="sec"><div class="tri"></div>仿真文件视图</div>
            <div class="sec"><div class="tri"></div>预览</div>
            <div style="height:6px;flex:none"></div>`;
    }
}

// the little symbols in front of a tree label, x is measured from the left of the name cell
function expander(x) {
    return `<rect x="${x}" y="6" width="11" height="11" fill="none" stroke="#b0b0b0"/><path d="M${x + 5.5} 6v11M${x} 11.5h11" stroke="#b0b0b0"/>`;
}
function treeLine() {
    return `<path d="M8.5 0V24M8.5 12H15" fill="none" stroke="#8c8c8c"/>`;
}
function check(x, color) {
    return `<rect x="${x}" y="6" width="11" height="11" fill="#3a3a3a" stroke="#c4c4c4"/><path d="M${x + 2} 12l3 3 5-8" fill="none" stroke="${color}" stroke-width="1.6"/>`;
}
function folder(x) {
    return `<path d="M${x} 7h4l1.5 2H${x + 11}l-1 7H${x}z" fill="none" stroke="#cfcfcf"/><path d="M${x} 9.5H${x + 12}" stroke="#cfcfcf"/>`;
}
const LEADS = {
    fem: [16, `<path d="M3 12 L9 8 L14 10 L13 16 H4z" fill="#e6cf34"/><path d="M4 11 L11 8 L15 11 L8 15z" fill="#3d50d8"/><path d="M6 10 L12 13 M9 9 L6 14" stroke="#e6e6ff"/>`],
    prt: [32, expander(2) + `<path d="M16 9h12v6H16z" fill="#f2ec30"/><path d="M19 8h9v2H19z" fill="#e8e8e8"/>`],
    poly: [45, `<path d="M8.5 17V24" stroke="#8c8c8c"/>` + expander(2) + check(17, '#e0203c') + folder(30)],
    ctrl: [45, treeLine() + check(17, '#e0203c') + `<circle cx="33" cy="9" r="1" fill="#ccc"/><circle cx="36" cy="8" r="1" fill="#ccc"/><rect x="34" y="9" width="8" height="8" fill="#ddd"/><path d="M36 11h4M36 13h4" stroke="#333"/>`],
    csys: [32, treeLine() + folder(17)],
    sel: [45, treeLine() + check(17, '#9a9a9a') + `<rect x="30" y="5" width="9" height="8" fill="#e8e8e8" stroke="#2a9a4a"/><rect x="30" y="5" width="9" height="2.5" fill="#2a9a4a"/><circle cx="40" cy="16" r="3.5" fill="#c01818"/><path d="M37 16h6M40 13v6" stroke="#111"/>`],
    grp: [32, treeLine() + `<rect x="17" y="6" width="11" height="11" fill="#4a4a4a" stroke="#aaa"/><rect x="19" y="8" width="6" height="6" fill="#d8731c"/>`],
    fld: [32, treeLine() + `<text x="16" y="15" font-size="7.5" font-weight="700" font-family="Liberation Serif" fill="#2a1a80">F[x]</text>`],
    obj: [32, `<path d="M8.5 0V12H15" fill="none" stroke="#8c8c8c"/><path d="M16 6h8l4 3v9h-8V9h-4z" fill="#2a3fb0"/><rect x="21" y="10" width="7" height="8" fill="#d8dcf8"/><circle cx="22" cy="8" r="1.6" fill="#ecb060"/>`],
};

class NxRow extends HTMLElement {
    connectedCallback() {
        const lead = LEADS[this.getAttribute('kind')];
        const blue = this.hasAttribute('blue');
        const leadSvg = lead ? `<svg width="${lead[0]}" height="23.33" viewBox="0 0 ${lead[0]} 23.33">${lead[1]}</svg>` : '';
        this.attachShadow({ mode: 'open' }).innerHTML = `
            <style>
                :host { display: grid; grid-template-columns: 201px 29px 125px 1fr; height: 23.33px; flex: none; font-size: 15px; color: ${blue ? '#0c0ce0' : '#d4d4d4'};
                    background: #383838; box-shadow: inset 0 -1px 0 #2e2e2e; white-space: nowrap; }
                :host(:nth-child(even)) { background: #343434; }
                .c { border-right: 1px solid #2c2c2c; overflow: hidden; display: flex; align-items: center; line-height: 23px; box-sizing: border-box; }
                .c:first-child { letter-spacing: .15px; }
                svg { flex: none; display: block; }
                .s { padding-left: 3px; }
                .f { padding-left: 4px; color: #d4d4d4; border-right: 0; }
            </style>
            <div class="c">${leadSvg}<slot></slot></div>
            <div class="c"></div>
            <div class="c s">${this.getAttribute('state') || ''}</div>
            <div class="c f">${this.hasAttribute('filter') ? '(过滤 : 关)(排序 : 关)' : ''}</div>`;
    }
}

class NxViewport extends HTMLElement {
    connectedCallback() {
        const cx = 1157;
        // side wall of a turned section, coordinates are page coordinates through the viewBox
        const wall = (y1, r1, ry1, y2, r2, ry2, fill) =>
            `<path d="M${cx - r1} ${y1} L${cx - r2} ${y2} A${r2} ${ry2} 0 0 0 ${cx + r2} ${y2} L${cx + r1} ${y1} A${r1} ${ry1} 0 0 0 ${cx - r1} ${y1}Z" fill="${fill}" stroke="#333" stroke-width="1.2"/>`;
        const disc = (y, r, ry, fill, stroke = '#333', sw = 1.2) =>
            `<ellipse cx="${cx}" cy="${y}" rx="${r}" ry="${ry}" fill="${fill}" stroke="${stroke}" stroke-width="${sw}"/>`;
        this.attachShadow({ mode: 'open' }).innerHTML = `
            <style>
                :host { display: flex; flex-direction: column; flex: 1; min-width: 0; margin-left: 4px; }
                .tabs { height: 28px; display: flex; flex: none; padding-top: 1px; box-sizing: border-box; }
                .tab { width: 229px; background: #3398bd; display: flex; align-items: center; font-size: 15px; letter-spacing: .15px; color: #e4f1f6; box-sizing: border-box; padding-left: 4px; white-space: nowrap; border-bottom: 2px solid #3398bd; }
                .tab svg { flex: none; }
                .view { flex: 1; min-height: 0; display: block; width: 100%; height: 801px; background: linear-gradient(#8fb9d8 0, #b5cee1 30%, #d6e1e9 55%, #e6e9eb 72%, #e6e6e6 100%); }
            </style>
            <div class="tabs">
                <div class="tab">
                    <svg width="14" height="14" viewBox="0 0 14 14" style="margin-right:4px"><path d="M1 2v9h6" fill="none" stroke="#2338c8" stroke-width="1.3"/><path d="M8 2h4l1 5-2 5H8l-2-5z" fill="#efc92c"/><path d="M3 7h3" stroke="#c82020"/></svg>
                    (FEM) HSK63E_fem1.fem
                    <svg width="10" height="10" viewBox="0 0 10 10" style="margin-left:5px"><rect x="1" y="1.5" width="6.5" height="7" fill="none" stroke="#fff" stroke-width="1.3"/><path d="M5 5h4" stroke="#fff"/></svg>
                    <svg width="10" height="10" viewBox="0 0 10 10" style="margin-left:4px"><path d="M2 2l6 6M8 2l-6 6" stroke="#fff" stroke-width="1.8"/></svg>
                </div>
            </div>
            <svg class="view" viewBox="544 215 947 801" preserveAspectRatio="xMinYMin slice">
                <defs>
                    <linearGradient id="metal" x1="0" x2="1" y1="0" y2="0">
                        <stop offset="0" stop-color="#858585"/><stop offset=".07" stop-color="#7a7a7a"/><stop offset=".22" stop-color="#666"/>
                        <stop offset=".45" stop-color="#717171"/><stop offset=".65" stop-color="#7c7c7c"/><stop offset=".9" stop-color="#828282"/><stop offset="1" stop-color="#777"/>
                    </linearGradient>
                    <linearGradient id="hole" x1="0" x2="1" y1="0" y2="0">
                        <stop offset="0" stop-color="#6e6e6e"/><stop offset=".25" stop-color="#858585"/><stop offset=".55" stop-color="#757575"/><stop offset=".85" stop-color="#626262"/><stop offset="1" stop-color="#707070"/>
                    </linearGradient>
                    <linearGradient id="fillet" x1="0" x2="1" y1="0" y2="0">
                        <stop offset="0" stop-color="#aaa"/><stop offset=".25" stop-color="#8a8a8a"/><stop offset=".6" stop-color="#e4e4e4"/><stop offset=".85" stop-color="#a8a8a8"/><stop offset="1" stop-color="#c4c4c4"/>
                    </linearGradient>
                    <linearGradient id="bright" x1="0" x2="1" y1="0" y2="0">
                        <stop offset="0" stop-color="#8c8c8c"/><stop offset=".35" stop-color="#aaa"/><stop offset=".65" stop-color="#f2f2f2"/><stop offset=".85" stop-color="#bdbdbd"/><stop offset="1" stop-color="#888"/>
                    </linearGradient>
                    <clipPath id="bore"><ellipse cx="${cx}" cy="520" rx="120" ry="42"/></clipPath>
                </defs>
                ${wall(960, 187, 70, 1030, 187, 70, 'url(#metal)')}
                ${wall(879, 222, 93, 917, 222, 90, 'url(#metal)')}
                ${disc(879, 222, 93, '#c2c2c2')}
                ${disc(875, 204, 79, 'url(#bright)')}
                ${disc(870, 198, 73, '#878787', '#333', 1)}
                ${disc(866, 190, 68, 'none', '#4a4a4a', .8)}
                ${wall(725, 222, 88, 832, 222, 90, 'url(#metal)')}
                <path d="M1000 896 A222 90 0 0 0 1314 896" fill="none" stroke="#2c2c2c" stroke-width="2.5"/>
                ${disc(725, 222, 88, '#bfbfbf')}
                ${disc(722, 172, 64, '#bdbdbd', '#3a3a3a', 1)}
                ${disc(717, 171, 62, '#555', '#333', 1.4)}
                ${wall(522, 161, 62, 712, 171, 65, 'url(#metal)')}
                ${disc(522, 161, 62, 'url(#fillet)')}
                ${disc(518, 152.5, 55, '#c4c4c4', '#333', 1.1)}
                ${disc(516, 123.5, 45.5, '#b0b0b0', '#333', 1)}
                ${disc(520, 120, 42, 'url(#hole)', '#333', 1)}
                <g clip-path="url(#bore)"><ellipse cx="${cx}" cy="569" rx="46" ry="12" fill="#3e3e3e"/></g>
                <path d="M1157 473 L1159 495 L1157 513 L1155 495Z" fill="#1238d8"/>
                <path d="M1159 516 L1178 509 L1192 506 L1176 513Z" fill="#2aa82a"/>
                <path d="M1159 518 L1172 523 L1186 531 L1170 526Z" fill="#d42828"/>
                <g font-family="Liberation Serif" font-size="10">
                    <text x="1161" y="473" fill="#4a6ae0">ZC</text>
                    <text x="1182" y="504" fill="#3f9a3f">YC</text>
                    <text x="1174" y="543" fill="#cc4444">XC</text>
                </g>
            </svg>`;
    }
}

class NxStatusbar extends HTMLElement {
    connectedCallback() {
        this.attachShadow({ mode: 'open' }).innerHTML = `
            <style>
                :host { display: flex; flex-direction: column; flex: none; margin-left: -2px; padding-left: 2px; }
                .line { height: 24px; background: #2f2f2f; border-top: 1px solid #1c1c1c; box-sizing: border-box; display: flex; align-items: center; justify-content: space-between; padding: 0 3px 3px 3px; }
                .msg { font-size: 14.3px; font-weight: 700; letter-spacing: .1px; color: #e6e6e6; white-space: nowrap; }
                .mark { font: 13.5px "Liberation Mono", "Noto Sans CJK SC", monospace; letter-spacing: .9px; color: #e8e8e8; white-space: nowrap; position: relative; top: 6px; z-index: 1; }
                .blue { height: 7px; background: #2a74b8; }
            </style>
            <div class="line"><div class="msg">新建 FEM 和仿真</div><div class="mark">UG爱好者论坛@qq277383215</div></div>
            <div class="blue"></div>`;
    }
}

customElements.define('nx-icon', NxIcon);
customElements.define('nx-caret', NxCaret);
customElements.define('nx-app', NxApp);
customElements.define('nx-titlebar', NxTitlebar);
customElements.define('nx-menubar', NxMenubar);
customElements.define('nx-ribbon', NxRibbon);
customElements.define('nx-group', NxGroup);
customElements.define('nx-rbtn', NxRbtn);
customElements.define('nx-stack', NxStack);
customElements.define('nx-select', NxSelect);
customElements.define('nx-toolbar', NxToolbar);
customElements.define('nx-main', NxMain);
customElements.define('nx-rail', NxRail);
customElements.define('nx-navigator', NxNavigator);
customElements.define('nx-row', NxRow);
customElements.define('nx-viewport', NxViewport);
customElements.define('nx-statusbar', NxStatusbar);
</script>
</body>
</html>
